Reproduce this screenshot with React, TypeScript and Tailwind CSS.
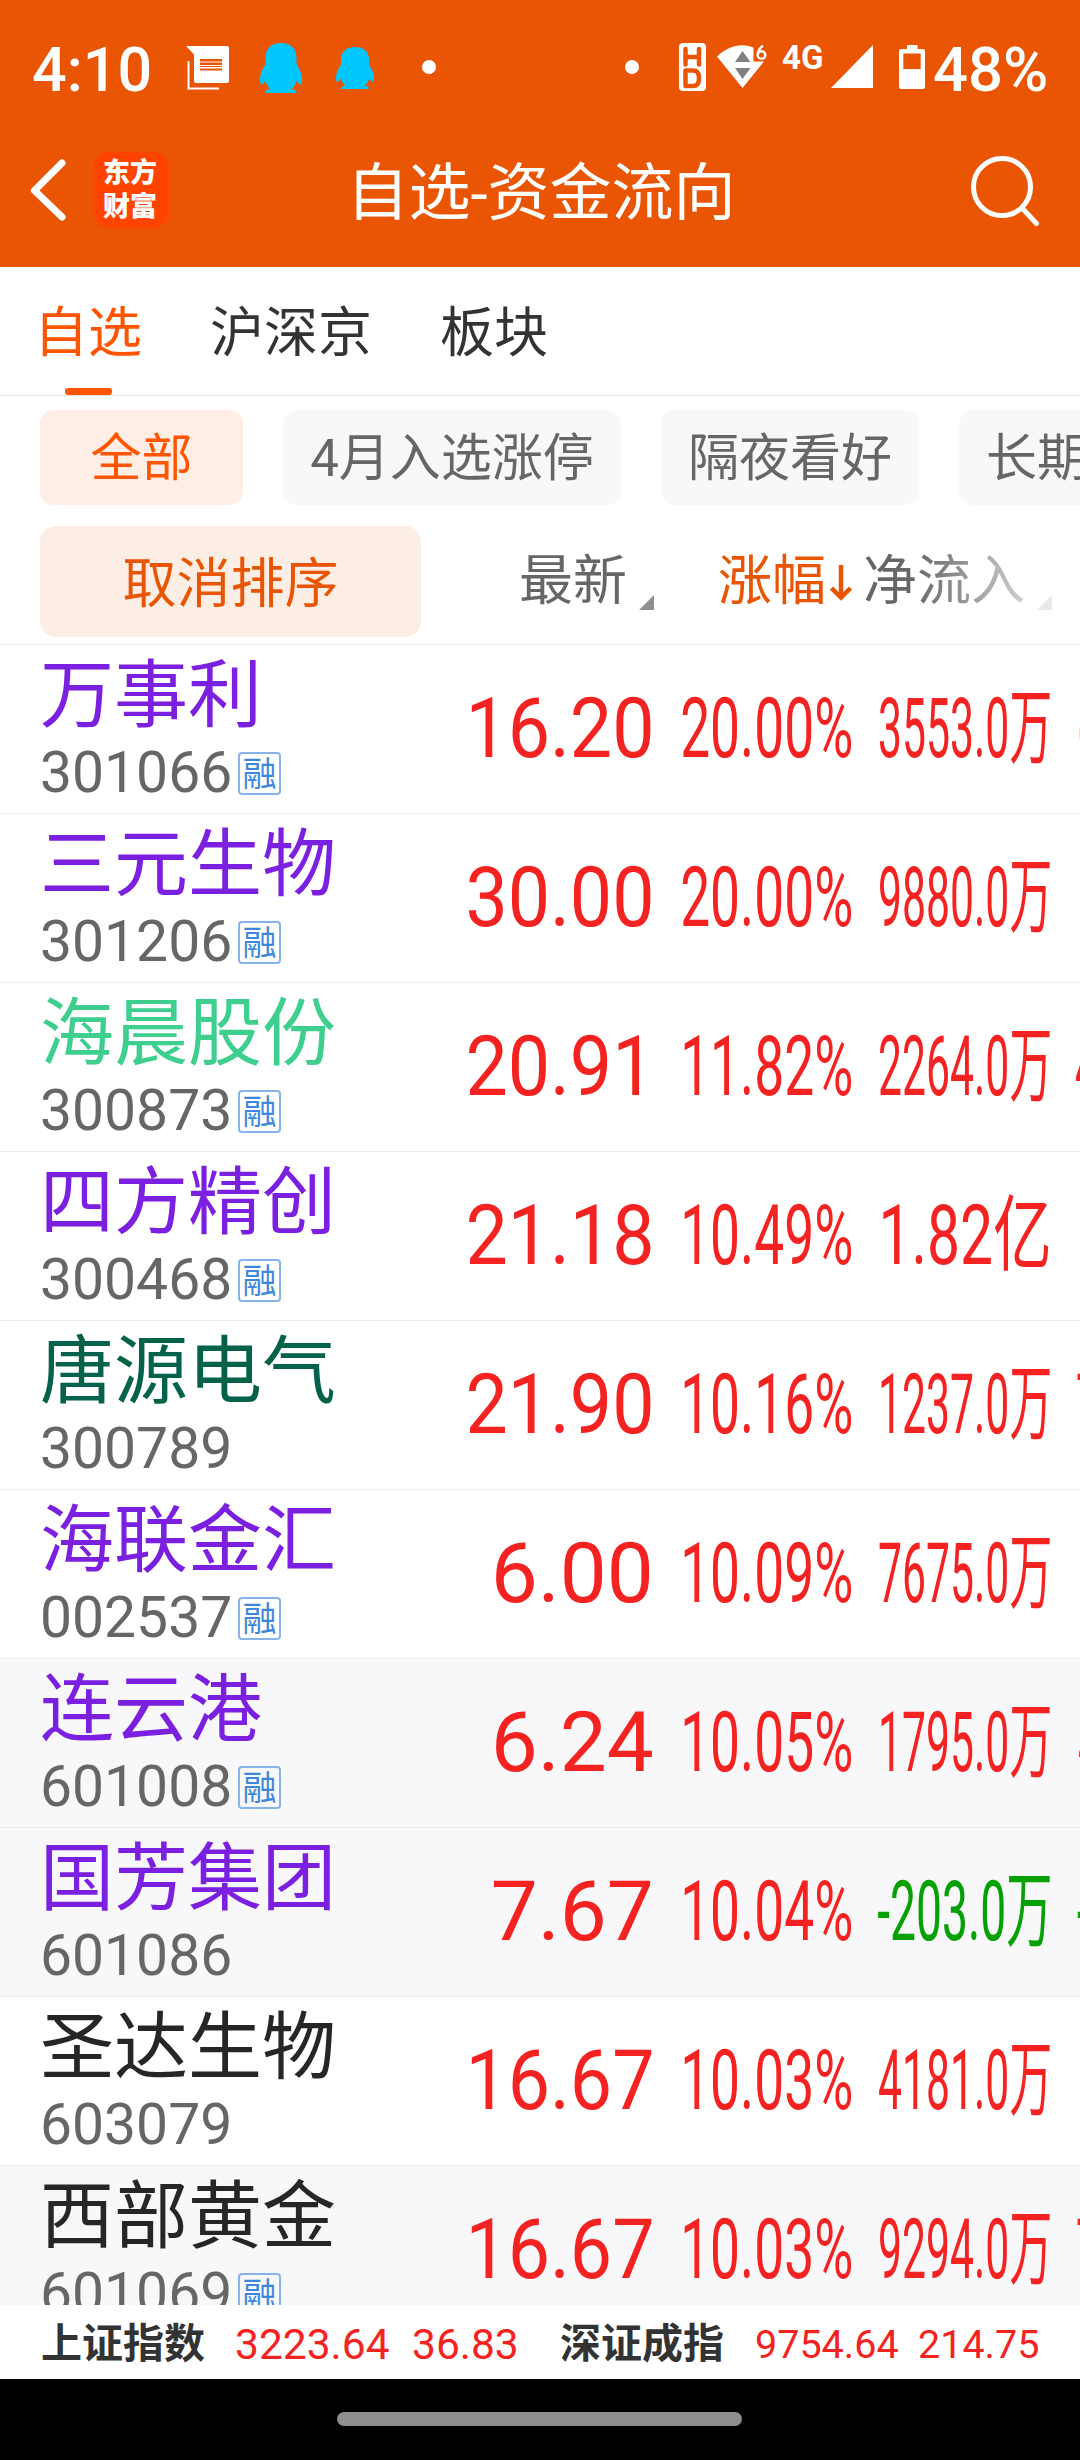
import React from "react";

type Stock = {
  name: string;
  code: string;
  tone: string;
  margin?: boolean;
  held?: boolean;
  price: string;
  priceScale: string;
  change: string;
  flow: string;
  flowScale: string;
  flowTone?: string;
  next?: string;
  nextPad?: string;
};

const PURPLE = "text-[#7b1fe0]";
const FIVE = "scale-x-[0.907]";
const FOUR = "scale-x-[1.008]";
const WAN = "scale-x-[0.515]";

const stocks: Stock[] = [
  { name: "万事利", code: "301066", tone: PURPLE, margin: true, price: "16.20", priceScale: FIVE, change: "20.00%", flow: "3553.0万", flowScale: WAN, next: "6", nextPad: "pl-[25px]" },
  { name: "三元生物", code: "301206", tone: PURPLE, margin: true, price: "30.00", priceScale: FIVE, change: "20.00%", flow: "9880.0万", flowScale: WAN },
  { name: "海晨股份", code: "300873", tone: "text-[#3ecf8e]", margin: true, price: "20.91", priceScale: FIVE, change: "11.82%", flow: "2264.0万", flowScale: WAN, next: "4", nextPad: "pl-[23px]" },
  { name: "四方精创", code: "300468", tone: PURPLE, margin: true, price: "21.18", priceScale: FIVE, change: "10.49%", flow: "1.82亿", flowScale: "scale-x-[0.708]" },
  { name: "唐源电气", code: "300789", tone: "text-[#04614a]", price: "21.90", priceScale: FIVE, change: "10.16%", flow: "1237.0万", flowScale: WAN, next: "7", nextPad: "pl-[24px]" },
  { name: "海联金汇", code: "002537", tone: PURPLE, margin: true, price: "6.00", priceScale: FOUR, change: "10.09%", flow: "7675.0万", flowScale: WAN },
  { name: "连云港", code: "601008", tone: PURPLE, margin: true, held: true, price: "6.24", priceScale: FOUR, change: "10.05%", flow: "1795.0万", flowScale: WAN, next: "4", nextPad: "pl-[26px]" },
  { name: "国芳集团", code: "601086", tone: PURPLE, held: true, price: "7.67", priceScale: FOUR, change: "10.04%", flow: "-203.0万", flowScale: "scale-x-[0.557]", flowTone: "text-[#04a004]", next: "-", nextPad: "pl-[25px]" },
  { name: "圣达生物", code: "603079", tone: "text-[#262626]", price: "16.67", priceScale: FIVE, change: "10.03%", flow: "4181.0万", flowScale: WAN },
  { name: "西部黄金", code: "601069", tone: "text-[#262626]", margin: true, held: true, price: "16.67", priceScale: FIVE, change: "10.03%", flow: "9294.0万", flowScale: WAN, next: "7", nextPad: "pl-[24px]" },
];

function Penguin({ className }: { className: string }) {
  return (
    <svg viewBox="0 0 42 50" preserveAspectRatio="none" className={className} fill="#00c8ff">
      <path d="M21 0C11 0 5.500 6 5.500 15V21C2.500 26 0 31 0 36C0 40 .8 42 1.800 41.500C3 41 4.500 39 5.200 37.500C6 41 8 44 10.500 46C7 46.500 5.200 47.500 5.200 49C5.200 50 7 50 9 50H33C35 50 36.500 50 36.500 49C36.500 47.500 35 46.500 31.500 46C34 44 36 41 36.800 37.500C37.500 39 39 41 40.200 41.500C41.200 42 42 40 42 36C42 31 39.500 26 36.500 21V15C36.500 6 31 0 21 0Z" />
    </svg>
  );
}

function StatusBar() {
  return (
    <div className="flex h-[110px] pt-[43px] pl-[32px] text-white">
      <span className="-mt-[3px] w-[154px] text-[61px] leading-[61px] font-medium">4:10</span>
      <svg viewBox="0 0 43 44" className="mt-[3px] h-[44px] w-[43px]" fill="#fff">
        <path d="M0 0H41Q43 0 43 2V35Q43 37 41 37H10Q8 37 8 35V8.500Z" />
        <path d="M2.500 15V42.500H33" fill="none" stroke="#fff" strokeWidth="2" />
        <path d="M14 14H36M14 18H36M14 23.500H36" stroke="#ea5504" strokeWidth="2" />
        <path d="M14 16H36M14 20.500H36" stroke="#ea5504" strokeWidth="1" />
      </svg>
      <Penguin className="ml-[31px] h-[50px] w-[42px]" />
      <Penguin className="mt-[4px] ml-[34px] h-[42px] w-[38px]" />
      <i className="mt-[17px] ml-[48px] size-[14px] rounded-full bg-white" />
      <i className="mt-[17px] ml-[189px] size-[14px] rounded-full bg-white" />
      <svg viewBox="0 0 27 48" className="ml-[40px] h-[48px] w-[27px]">
        <rect width="27" height="48" rx="4" fill="#fff" />
        <g fill="none" stroke="#ea5504" strokeWidth="4.500" strokeLinejoin="round" strokeLinecap="round">
          <path d="M6.500 6V21.500M20 6V21.500M6.500 14H20" />
          <path d="M6.500 27.500V43H14Q20 43 20 35.200Q20 27.500 14 27.500Z" />
        </g>
      </svg>
      <svg viewBox="0 0 50 44" className="mt-[2px] ml-[11px] h-[44px] w-[50px]">
        <path d="M0 11.500Q17 -5 36.500 2.500V16.500H47L25.500 43Z" fill="#fff" />
        <path d="M25.500 6L33.500 17H18ZM25.500 34L33.500 23H18Z" fill="#808080" />
        <g fill="none" stroke="#fff" strokeWidth="2.400">
          <circle cx="44.500" cy="10" r="3.800" />
          <path d="M46 .7Q41 4 40.800 9.500" />
        </g>
      </svg>
      <span className="-mt-[1px] ml-[15px] w-[49px] text-[33px] leading-[32px] font-bold">4G</span>
      <svg viewBox="0 0 42 43" className="mt-[2px] h-[43px] w-[42px]" fill="#fff">
        <path d="M42 0V43H0Z" />
      </svg>
      <svg viewBox="0 0 26 44" className="mt-[2px] ml-[26px] h-[44px] w-[26px]" fill="#fff">
        <path fillRule="evenodd" d="M8 0H18.500V4H24Q26 4 26 6.500V41.500Q26 44 24 44H2Q0 44 0 41.500V6.500Q0 4 2 4H8ZM4.300 8.500V24H21.700V8.500Z" />
      </svg>
      <span className="-mt-[3px] ml-[8px] text-[61.500px] leading-[61px] font-medium">48%</span>
    </div>
  );
}

function TitleBar() {
  return (
    <div className="flex h-[157px] items-center pb-[3px] text-white">
      <svg viewBox="0 0 36 62" className="mt-[6px] ml-[30px] h-[62px] w-[36px]" fill="none" stroke="#fff" strokeWidth="7" strokeLinecap="round" strokeLinejoin="round">
        <path d="M32 4L4.500 31.500L32 58" />
      </svg>
      <div className="mt-[6px] ml-[27px] flex h-[76px] w-[76px] flex-col items-center justify-center rounded-[16px] bg-[#ff4400] pr-[2px] text-[27px] leading-[34px] font-black">
        <span>东方</span>
        <span>财富</span>
      </div>
      <h1 className="mt-[14px] ml-[175px] w-[394px] text-center text-[62px] leading-[80px] whitespace-nowrap">自选-资金流向</h1>
      <svg viewBox="0 0 70 72" className="mt-[8px] ml-[233px] h-[72px] w-[70px]" fill="none" stroke="#fff" strokeWidth="5" strokeLinecap="round">
        <circle cx="31" cy="32" r="28.500" />
        <path d="M51 53L65.500 68.500" />
      </svg>
    </div>
  );
}

function Corner({ className }: { className: string }) {
  return (
    <svg viewBox="0 0 15 15" className={className}>
      <path d="M15 0V15H0Z" fill="currentColor" />
    </svg>
  );
}

function StockRow({ s }: { s: Stock }) {
  return (
    <div className={`flex h-[169px] shrink-0 border-b border-[#ebebed] ${s.held ? "bg-[#f8f8fa]" : "bg-white"}`}>
      <div className="w-[420px] pl-[40px]">
        <div className={`h-[102px] pt-[5px] text-[74px] leading-[92px] whitespace-nowrap ${s.tone}`}>{s.name}</div>
        <div className="flex">
          <span className="mt-[2px] w-[194px] text-[57px] leading-[48px] text-[#666]">{s.code}</span>
          {s.margin && (
            <span className="mt-[5px] ml-[4px] flex size-[43px] items-center justify-center rounded-[4px] border-2 border-[#86b3ea] text-[34px] leading-[36px] text-[#3f87dc]">融</span>
          )}
        </div>
      </div>
      <div className="flex pt-[34px] text-[83px] leading-[100px] whitespace-nowrap text-[#f52222]">
        <div className="flex w-[234px] justify-end">
          <span className={`origin-right ${s.priceScale}`}>{s.price}</span>
        </div>
        <div className="flex w-[199px] justify-end">
          <span className="origin-right scale-x-[0.643]">{s.change}</span>
        </div>
        <div className="flex w-[199px] justify-end">
          <span className={`origin-right ${s.flowScale} ${s.flowTone ?? ""}`}>{s.flow}</span>
        </div>
        {s.next && (
          <div className={`flex w-[28px] overflow-hidden ${s.nextPad ?? ""}`}>
            <span className={`origin-left scale-x-[0.52] ${s.flowTone ?? ""}`}>{s.next}</span>
          </div>
        )}
      </div>
    </div>
  );
}

export default function App() {
  return (
    <div className="flex h-[2460px] w-[1080px] flex-col overflow-hidden bg-white font-[Roboto,'Noto_Sans_CJK_SC',sans-serif]">
      <header className="h-[267px] shrink-0 bg-[#ea5504]">
        <StatusBar />
        <TitleBar />
      </header>

      <nav className="flex h-[129px] shrink-0 gap-[68px] border-b border-[#e4e4e4] pl-[34px] text-[54px] leading-[133px] text-[#333]">
        <div className="relative h-[128px] text-[#ff5500]">
          自选
          <i className="absolute bottom-0 left-[31px] h-[7px] w-[47px] rounded-[3px] bg-[#ff5500]" />
        </div>
        <div>沪深京</div>
        <div>板块</div>
      </nav>

      <div className="flex shrink-0 gap-[40px] pt-[14px] pl-[40px] text-[51px] leading-[98px] whitespace-nowrap text-[#666]">
        <div className="h-[95px] w-[203px] shrink-0 rounded-[14px] bg-[#ffeee6] text-center text-[#ff5500]">全部</div>
        <div className="h-[95px] w-[338px] shrink-0 rounded-[14px] bg-[#f8f8fa] text-center">4月入选涨停</div>
        <div className="h-[95px] w-[258px] shrink-0 rounded-[14px] bg-[#f8f8fa] text-center">隔夜看好</div>
        <div className="h-[95px] w-[258px] shrink-0 rounded-[14px] bg-[#f8f8fa] text-center">长期看好</div>
      </div>

      <div className="flex h-[140px] shrink-0 border-b border-[#ebebed] pt-[21px] pl-[40px] text-[54px] leading-[111px] whitespace-nowrap text-[#666]">
        <div className="h-[111px] w-[381px] rounded-[16px] bg-[#fdeee5] text-center leading-[117px] text-[#ea5504]">取消排序</div>
        <div className="ml-[98px] flex">
          最新
          <Corner className="mt-[69px] ml-[12px] size-[15px] text-[#8e8e93]" />
        </div>
        <div className="ml-[64px] flex text-[#ea5504]">
          涨幅
          <svg viewBox="0 0 22 36" className="mt-[39px] ml-[4px] h-[36px] w-[22px]" fill="none" stroke="#ea5504" strokeWidth="4.500">
            <path d="M11 0V31M1.500 23L11 32.500L20.500 23" />
          </svg>
        </div>
        <div className="ml-[11px] flex">
          <span className="bg-linear-to-r from-[#666] from-30% to-[#d0d0d0] bg-clip-text text-transparent">净流入</span>
          <Corner className="mt-[69px] ml-[12px] size-[15px] text-[#e9e9ea]" />
        </div>
      </div>

      <main className="flex h-[1660px] shrink-0 flex-col overflow-hidden">
        {stocks.map((s) => (
          <StockRow key={s.code} s={s} />
        ))}
      </main>

      <footer className="relative flex h-[74px] shrink-0 bg-white pl-[41px] leading-[79px] whitespace-nowrap text-[#f52222]">
        <span className="w-[194px] text-[41px] font-bold text-[#333]">上证指数</span>
        <span className="w-[177px] text-[42.500px]">3223.64</span>
        <span className="w-[148px] text-[42.500px]">36.83</span>
        <span className="w-[195px] text-[41px] font-bold text-[#333]">深证成指</span>
        <span className="w-[163px] text-[39.500px]">9754.64</span>
        <span className="text-[39.500px]">214.75</span>
      </footer>

      <div className="flex h-[81px] shrink-0 bg-black pt-[33px] pl-[337px]">
        <i className="h-[14px] w-[405px] rounded-full bg-[#8e8e8e]" />
      </div>
    </div>
  );
}
